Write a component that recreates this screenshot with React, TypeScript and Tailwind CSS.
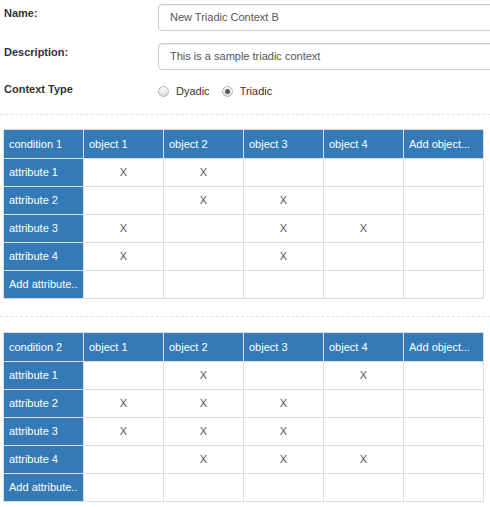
import React from "react";

type Ctx = {
  condition: string;
  objects: string[];
  attributes: string[];
  marks: number[][];
};

const contexts: Ctx[] = [
  {
    condition: "condition 1",
    objects: ["object 1", "object 2", "object 3", "object 4"],
    attributes: ["attribute 1", "attribute 2", "attribute 3", "attribute 4"],
    marks: [
      [1, 1, 0, 0],
      [0, 1, 1, 0],
      [1, 0, 1, 1],
      [1, 0, 1, 0],
    ],
  },
  {
    condition: "condition 2",
    objects: ["object 1", "object 2", "object 3", "object 4"],
    attributes: ["attribute 1", "attribute 2", "attribute 3", "attribute 4"],
    marks: [
      [0, 1, 0, 1],
      [1, 1, 1, 0],
      [1, 1, 1, 0],
      [0, 1, 1, 1],
    ],
  },
];

function Radio({ checked, label }: { checked?: boolean; label: string }) {
  return (
    <label className="flex items-center gap-[7px]">
      <span className="flex h-[11px] w-[11px] items-center justify-center rounded-full border border-[#b4b4b4] bg-[linear-gradient(#fdfdfd,#dcdcdc)]">
        {checked && <span className="h-[5px] w-[5px] rounded-full bg-[#5a5a5a]" />}
      </span>
      <span>{label}</span>
    </label>
  );
}

function ContextTable({ ctx }: { ctx: Ctx }) {
  const th = "h-[28px] w-[80px] border border-[#ddd] bg-[#337ab7] px-[5px] text-left font-normal text-white whitespace-nowrap overflow-hidden";
  const td = "h-[28px] w-[80px] border border-[#ddd] text-center text-[#555]";
  return (
    <table className="ml-[3px] w-[481px] table-fixed border-collapse">
      <thead>
        <tr>
          <th className={th + " h-[29px]"}>{ctx.condition}</th>
          {ctx.objects.map((o) => (
            <th key={o} className={th + " h-[29px]"}>
              {o}
            </th>
          ))}
          <th className={th + " h-[29px]"}>Add object...</th>
        </tr>
      </thead>
      <tbody>
        {ctx.attributes.map((a, i) => (
          <tr key={a}>
            <th className={th}>{a}</th>
            {ctx.marks[i].map((m, j) => (
              <td key={j} className={td}>
                {m ? "X" : ""}
              </td>
            ))}
            <td className={td}></td>
          </tr>
        ))}
        <tr>
          <th className={th}>Add attribute..</th>
          {ctx.objects.map((o) => (
            <td key={o} className={td}></td>
          ))}
          <td className={td}></td>
        </tr>
      </tbody>
    </table>
  );
}

export default function App() {
  return (
    <div className="w-full overflow-hidden bg-white font-['Liberation_Sans',Arial,sans-serif] text-[11px] leading-[17px] text-[#333]">
      <div className="flex flex-col gap-[12px] pt-[4px]">
        <div className="flex">
          <label className="w-[158px] shrink-0 pl-[4px] pt-[1px] font-bold">Name:</label>
          <div className="flex h-[27px] w-[340px] shrink-0 items-center rounded-[4px] border border-[#ccc] px-[11px] text-[#555] shadow-[inset_0_1px_1px_rgba(0,0,0,0.075)]">
            New Triadic Context B
          </div>
        </div>
        <div className="flex">
          <label className="w-[158px] shrink-0 pl-[4px] pt-[1px] font-bold">Description:</label>
          <div className="flex h-[27px] w-[340px] shrink-0 items-center rounded-[4px] border border-[#ccc] px-[11px] text-[#555] shadow-[inset_0_1px_1px_rgba(0,0,0,0.075)]">
            This is a sample triadic context
          </div>
        </div>
        <div className="flex -mt-[1px]">
          <label className="w-[158px] shrink-0 pl-[4px] font-bold">Context Type</label>
          <div className="flex items-center gap-[12px] pt-[2px]">
            <Radio label="Dyadic" />
            <Radio checked label="Triadic" />
          </div>
        </div>
      </div>

      <hr className="mt-[14px] mb-[14px] border-t border-dashed border-[#e2e2e2]" />
      <ContextTable ctx={contexts[0]} />
      <hr className="mt-[17px] mb-[15px] border-t border-dashed border-[#e2e2e2]" />
      <ContextTable ctx={contexts[1]} />
    </div>
  );
}
